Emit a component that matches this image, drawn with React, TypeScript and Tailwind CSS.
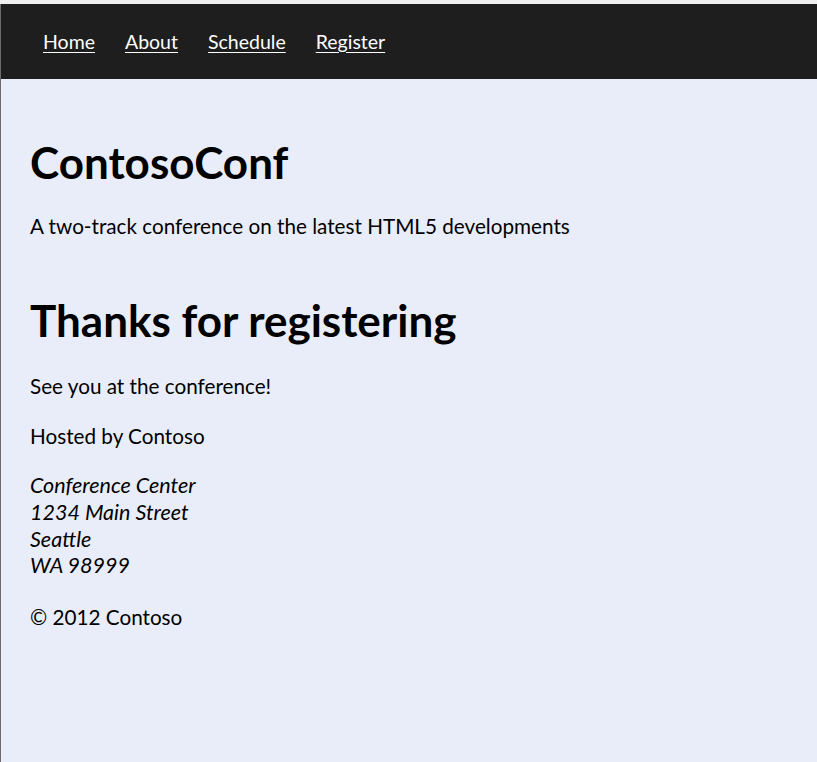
const navLinks = ['Home', 'About', 'Schedule', 'Register']

export default function App() {
  return (
    <div className="min-h-screen bg-[#f0f0f0] pt-[4px] font-['Lato',sans-serif] text-black">
      <div className="flex min-h-[758px] flex-col border-l border-[#6d6d6d] bg-[#e9edf9]">
        {/* Top navigation */}
        <nav className="flex h-[75px] items-start gap-[30px] bg-[#1e1e1e] pl-[42px] pt-[25px]">
          {navLinks.map((label) => (
            <a
              key={label}
              href="#"
              className="text-[19.5px] leading-[26.5px] text-white underline underline-offset-[3px]"
            >
              {label}
            </a>
          ))}
        </nav>

        {/* Page content */}
        <main className="px-[29px] pt-[57px] text-[20.7px] leading-[26.5px]">
          <header>
            <h1 className="text-[44px] font-bold leading-[1.2]">ContosoConf</h1>
            <p className="mt-[24px]">A two-track conference on the latest HTML5 developments</p>
          </header>

          <section className="mt-[55px]">
            <h2 className="text-[44px] font-bold leading-[1.2]">Thanks for registering</h2>
            <p className="mt-[26px]">See you at the conference!</p>
          </section>

          <footer>
            <p className="mt-[23px]">Hosted by Contoso</p>
            <address className="mt-[23px] text-[21.5px] italic leading-[26.7px]">
              Conference Center
              <br />
              1234 Main Street
              <br />
              Seattle
              <br />
              WA 98999
            </address>
            <p className="mt-[25px]">&copy; 2012 Contoso</p>
          </footer>
        </main>
      </div>
    </div>
  )
}
